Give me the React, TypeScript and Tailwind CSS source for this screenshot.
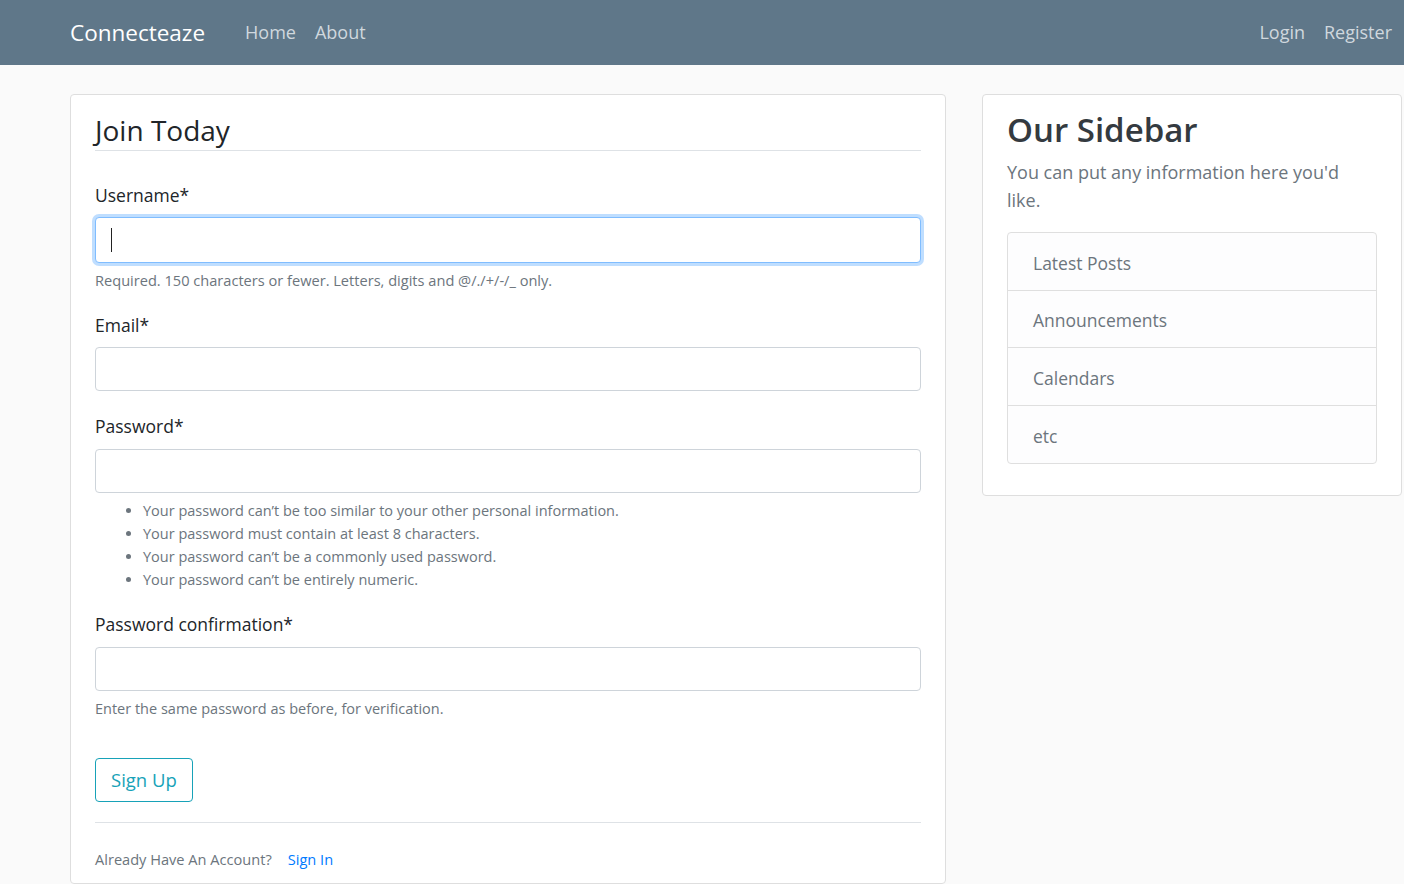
import React from "react";

const font = { fontFamily: '"Open Sans", "Noto Sans", sans-serif' };

function Field({ label }: { label: string }) {
  return <label className="block text-[17.5px] leading-[26px] text-[#212529]">{label}</label>;
}

function TextInput({ className = "" }: { className?: string }) {
  return (
    <input
      type="text"
      className={`block h-[44px] w-full rounded-[4px] border border-[#ced4da] bg-white px-3 outline-none ${className}`}
    />
  );
}

const rules = [
  "Your password can\u2019t be too similar to your other personal information.",
  "Your password must contain at least 8 characters.",
  "Your password can\u2019t be a commonly used password.",
  "Your password can\u2019t be entirely numeric.",
];

const links = ["Latest Posts", "Announcements", "Calendars", "etc"];

export default function App() {
  return (
    <div className="min-h-[884px] bg-[#fafafa]" style={font}>
      {/* top navigation */}
      <header className="flex h-[65px] items-center bg-[#5f7789] pl-[70px] pr-[12px]">
        <span className="mr-[40px] text-[22.5px] text-white">Connecteaze</span>
        <nav className="flex gap-[19px] text-[18px] text-[#d0d8de]">
          <span>Home</span>
          <span>About</span>
        </nav>
        <nav className="ml-auto flex gap-[19px] text-[18px] text-[#d0d8de]">
          <span>Login</span>
          <span>Register</span>
        </nav>
      </header>

      <main className="flex items-start gap-[36px] pl-[70px] pt-[29px]">
        {/* register form */}
        <section className="w-[876px] rounded-[4px] border border-[#dedede] bg-white px-[24px] pb-[14px] pt-[15px]">
          <h1 className="border-b border-[#dee2e6] text-[28px] font-normal leading-[40px] text-[#212529]">
            Join Today
          </h1>

          <div className="mt-[31px]">
            <Field label="Username*" />
            <div className="mt-[9px] flex h-[46px] w-full items-center rounded-[4px] border border-[#80bdff] bg-white px-[15px] shadow-[0_0_0_3px_rgba(0,123,255,0.25)]">
              <span className="h-[24px] w-px bg-[#222]" />
            </div>
            <p className="mt-[7px] text-[14.6px] leading-[20px] text-[#6c757d]">
              Required. 150 characters or fewer. Letters, digits and @/./+/-/_ only.
            </p>
          </div>

          <div className="mt-[22px]">
            <Field label="Email*" />
            <TextInput className="mt-[9px]" />
          </div>

          <div className="mt-[22px]">
            <Field label="Password*" />
            <TextInput className="mt-[10px]" />
            <ul className="mt-[6px] list-disc pl-[48px] text-[14.5px] leading-[23px] text-[#6c757d] marker:text-[#6c757d]">
              {rules.map((r) => (
                <li key={r}>{r}</li>
              ))}
            </ul>
          </div>

          <div className="mt-[20px]">
            <Field label="Password confirmation*" />
            <TextInput className="mt-[10px]" />
            <p className="mt-[8px] text-[14.5px] leading-[20px] text-[#6c757d]">
              Enter the same password as before, for verification.
            </p>
          </div>

          <button className="mt-[39px] h-[44px] rounded-[4px] border border-[#17a2b8] px-[15px] text-[18.5px] text-[#17a2b8]">
            Sign Up
          </button>

          <div className="mt-[20px] border-t border-[#dee2e6] pt-[26px] text-[14.6px] leading-[20px] text-[#6c757d]">
            Already Have An Account?
            <span className="ml-[16px] text-[#007bff]">Sign In</span>
          </div>
        </section>

        {/* sidebar */}
        <aside className="w-[420px] rounded-[4px] border border-[#dedede] bg-white px-[24px] pb-[31px] pt-[13px]">
          <h2 className="text-[33px] font-semibold leading-[44px] text-[#343a40]">Our Sidebar</h2>
          <p className="mt-[6px] pr-[10px] text-[18px] leading-[28px] text-[#6c757d]">
            You can put any information here you'd like.
          </p>
          <ul className="mt-[18px] overflow-hidden rounded-[4px] border border-[#dfdfdf] bg-[#fdfdfe]">
            {links.map((l, i) => (
              <li
                key={l}
                className={`flex h-[57.5px] items-center px-[25px] pt-[3px] text-[17.5px] text-[#6c757d] ${i < links.length - 1 ? "border-b border-[#dfdfdf]" : ""}`}
              >
                {l}
              </li>
            ))}
          </ul>
        </aside>
      </main>
    </div>
  );
}
